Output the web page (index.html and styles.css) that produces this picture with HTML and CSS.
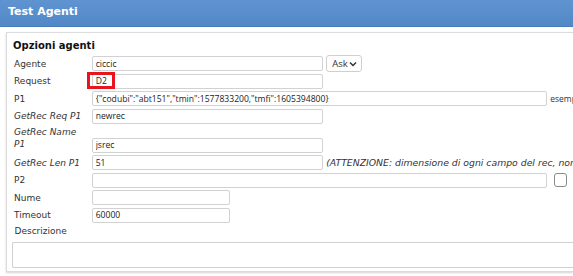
FILE: index.html
```html
<!DOCTYPE html>
<html>
<head>
<meta charset="utf-8">
<link rel="stylesheet" href="styles.css">
</head>
<body>
<div class="titlebar">Test Agenti</div>
<div class="content">
  <div class="box">
    <div class="box-title">Opzioni agenti</div>
    <div class="row">
      <div class="lbl">Agente</div>
      <input class="inp w-md" value="ciccic">
      <div class="sel">Ask <svg width="8" height="6" viewBox="0 0 8 6"><path d="M1 1.5 L4 4.5 L7 1.5" fill="none" stroke="#333" stroke-width="1.5"/></svg></div>
    </div>
    <div class="row">
      <div class="lbl">Request</div>
      <div class="reqwrap">
        <input class="inp w-md" value="D2">
        <span class="redmark"></span>
      </div>
    </div>
    <div class="row">
      <div class="lbl">P1</div>
      <input class="inp w-lg" value='{"codubi":"abt151","tmin":1577833200,"tmfi":1605394800}'>
      <span class="note ex">esempio</span>
    </div>
    <div class="row">
      <div class="lbl it">GetRec Req P1</div>
      <input class="inp w-md" value="newrec">
    </div>
    <div class="row tall">
      <div class="lbl it two">GetRec Name<br>P1</div>
      <input class="inp w-md" value="jsrec">
    </div>
    <div class="row">
      <div class="lbl it">GetRec Len P1</div>
      <input class="inp w-md" value="51">
      <span class="note it">(ATTENZIONE: dimensione di ogni campo del rec, non separato)</span>
    </div>
    <div class="row">
      <div class="lbl">P2</div>
      <input class="inp w-lg" value="">
      <span class="chk"></span>
    </div>
    <div class="row">
      <div class="lbl">Nume</div>
      <input class="inp w-sm" value="">
    </div>
    <div class="row">
      <div class="lbl">Timeout</div>
      <input class="inp w-sm" value="60000">
    </div>
    <div class="desc-lbl">Descrizione</div>
    <div class="textarea"></div>
  </div>
</div>
</body>
</html>
```

FILE: styles.css
```css
html, body {
  margin: 0;
  padding: 0;
  background: #fff;
  overflow: hidden;
}
body {
  font-family: "DejaVu Sans", Verdana, sans-serif;
  font-size: 9px;
  color: #333;
  width: 573px;
  height: 276px;
}
.titlebar {
  height: 26px;
  background: linear-gradient(#5f94d1, #5388c8);
  border-bottom: 1px solid #4a7dba;
  color: #fff;
  font-family: "DejaVu Sans", sans-serif;
  font-weight: bold;
  font-size: 11px;
  line-height: 24px;
  padding-left: 8px;
}
.content {
  padding: 5px 0 0 6px;
}
.box {
  border: 1px solid #dcdcdc;
  border-right: none;
  box-shadow: 0 1px 2px rgba(0,0,0,0.18);
  padding: 6.5px 0 0 6px;
  height: 240px;
  box-sizing: border-box;
  overflow: hidden;
}
.box-title {
  font-family: "DejaVu Sans", sans-serif;
  font-weight: bold;
  font-size: 10px;
  color: #111;
  line-height: 12px;
  margin-bottom: 3.25px;
}
.row {
  display: flex;
  align-items: center;
  height: 17.5px;
}
.row.tall {
  height: 29px;
  align-items: flex-end;
  padding-bottom: 1px;
  box-sizing: border-box;
}
.lbl {
  width: 78.7px;
  flex: none;
  color: #333;
  padding-left: 1px;
  box-sizing: border-box;
  white-space: nowrap;
}
.lbl.two {
  line-height: 12.5px;
  align-self: flex-start;
  padding-top: 1px;
}
.it {
  font-style: italic;
}
.inp {
  font-family: "Open Sans", "DejaVu Sans", sans-serif;
  font-size: 8.6px;
  color: #222;
  height: 15px;
  box-sizing: border-box;
  border: 1px solid #d2d2d2;
  border-radius: 2px;
  padding: 0 3px;
  margin: 0;
  background: #fff;
  outline: none;
  flex: none;
}
.w-md { width: 231px; }
.w-lg { width: 455px; }
.w-sm { width: 138px; }
.sel {
  margin-left: 3.5px;
  height: 17px;
  width: 36px;
  box-sizing: border-box;
  border: 1px solid #cfcfcf;
  border-radius: 3px;
  display: flex;
  align-items: center;
  justify-content: space-between;
  padding: 0 4px 0 5px;
  font-family: "Open Sans", sans-serif;
  font-size: 9.5px;
  color: #333;
  flex: none;
}
.reqwrap {
  position: relative;
  display: flex;
}
.redmark {
  position: absolute;
  left: -5px;
  top: -1.5px;
  width: 28px;
  height: 17px;
  border: 3.3px solid #e8141e;
  box-sizing: border-box;
}
.note {
  margin-left: 3.5px;
  white-space: nowrap;
  color: #333;
  font-size: 9.3px;
}
.note.ex {
  font-family: "Open Sans", sans-serif;
  font-size: 8.5px;
}
.chk {
  margin-left: 7px;
  width: 13px;
  height: 14px;
  border: 1px solid #8a8a8a;
  border-radius: 3px;
  box-sizing: border-box;
  flex: none;
}
.desc-lbl {
  margin-top: 1.5px;
  padding-left: 1.5px;
  height: 13px;
  line-height: 13px;
}
.textarea {
  margin-top: 3.5px;
  margin-left: -1.3px;
  height: 24px;
  border: 1px solid #d0d0d0;
  border-right: none;
  border-radius: 2px 0 0 2px;
}
```
